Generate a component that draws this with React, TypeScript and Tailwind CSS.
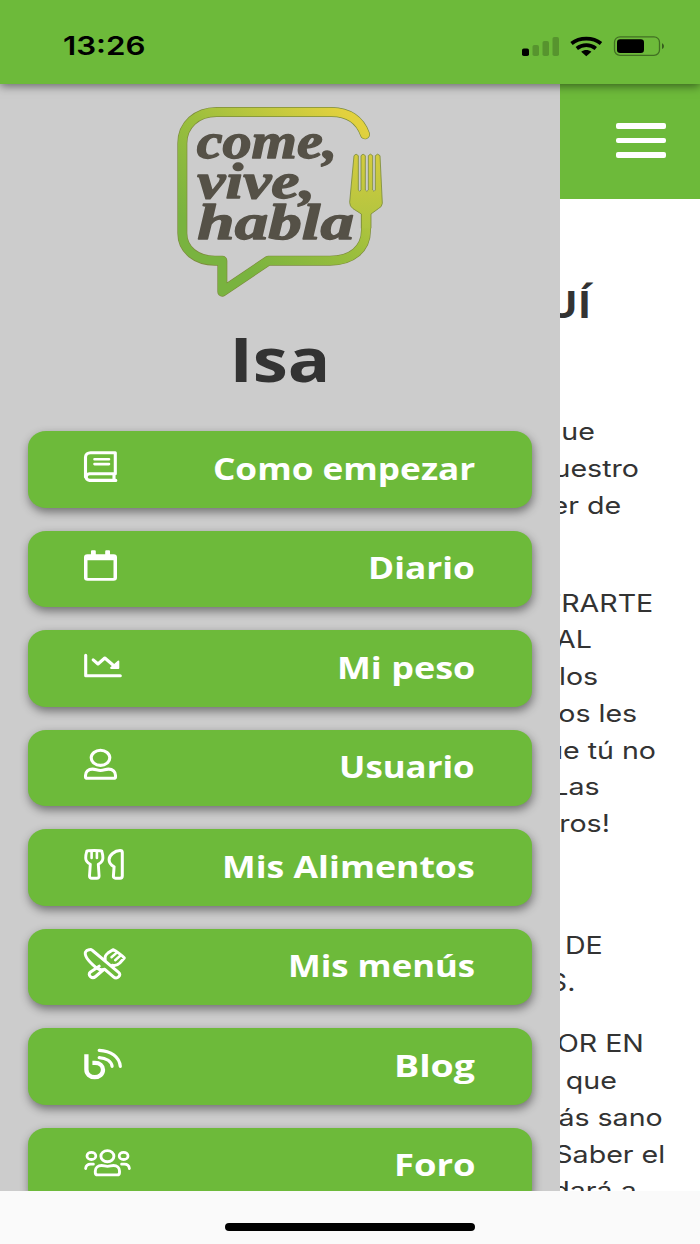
import React, { useLayoutEffect, useRef, useState } from 'react';
import cc from 'clsx';

interface FitTextProps {
  children: React.ReactNode;
  width: number;
  className?: string;
}

// stretches a single line of text horizontally to a given width
function FitText({ children, width, className }: FitTextProps) {
  const ref = useRef<HTMLSpanElement>(null);
  const [scale, setScale] = useState(1);

  useLayoutEffect(() => {
    if (ref.current) setScale(width / ref.current.offsetWidth);
  }, [width]);

  return (
    <span
      ref={ref}
      className={cc('inline-block whitespace-nowrap', className)}
      style={{ transform: `scaleX(${scale})` }}
    >
      {children}
    </span>
  );
}

function Icon({ children }: { children: React.ReactNode }) {
  return (
    <svg
      viewBox="0 0 52 40"
      className="h-10 w-[52px] shrink-0"
      fill="none"
      stroke="currentColor"
      strokeWidth={3.1}
      strokeLinecap="round"
      strokeLinejoin="round"
    >
      {children}
    </svg>
  );
}

const BookIcon = () => (
  <Icon>
    <path d="M35.3 26.7V5.7H10.5a5 4.5 0 0 0-5 4.5V30M35.8 33.4H9.5a4 3.4 0 0 1 0-6.7H35.3M34 27.5V33" />
    <path d="M14.5 12.3H29M14.5 17.1H29" strokeWidth={2.6} />
  </Icon>
);

const CalendarIcon = () => (
  <Icon>
    <path
      d="M11 8.2V5.2a1 1 0 0 1 1-1h2.8a1 1 0 0 1 1 1v3H25.2V5.2a1 1 0 0 1 1-1H29a1 1 0 0 1 1 1v3h3.6a3.4 3 0 0 1 3.4 3V31.8a3.4 3 0 0 1-3.4 3H7.4a3.4 3 0 0 1-3.4-3V11.2a3.4 3 0 0 1 3.4-3zM7.5 14.2V31.4a.5.5 0 0 0 .5.5H33a.5.5 0 0 0 .5-.5V14.2z"
      fill="currentColor"
      fillRule="evenodd"
      stroke="none"
    />
  </Icon>
);

const ChartIcon = () => (
  <Icon>
    <path d="M5.7 9.2V29.8H40.3" />
    <path d="M13.2 13.8L18 18l6.8-6L33 19" />
    <path d="M31 22L38.4 22V15.4z" fill="currentColor" strokeWidth={1.8} />
  </Icon>
);

const UserIcon = () => (
  <Icon>
    <ellipse cx="20.5" cy="12.8" rx="9.3" ry="7.6" />
    <path d="M12.5 24.1c3.2 0 4.6 1.4 8 1.4s4.8-1.4 8-1.4c4.2 0 7 2.9 7 6.3v1.3c0 .9-.7 1.6-1.7 1.6H7.2c-1 0-1.7-.7-1.7-1.6v-1.3c0-3.4 2.8-6.3 7-6.3z" />
  </Icon>
);

const UtensilsIcon = () => (
  <Icon>
    <path
      d="M6.8 6.2c1-.9 14-.9 15 0 .6 2 1.1 4.5 1.1 6.9 0 3-2 5-4.6 6.2l.8 11.7c.1 1.3-.9 2.2-2.3 2.2h-5c-1.4 0-2.4-.9-2.3-2.2l.8-11.7C7.7 18.1 5.7 16.1 5.7 13.1c0-2.4.5-4.9 1.1-6.9z"
      strokeWidth={2.9}
    />
    <path d="M11.6 6.5V13M16.9 6.5V13" strokeWidth={2.6} />
    <path
      d="M42.3 7.5V31c0 1.3-.9 2.2-2.2 2.2h-4.6c-1.4 0-2.2-.9-2.1-2.2l.7-9.3c-2.6-1.4-5-3.7-5-7 0-4.5 5.5-9 11-9.1 1.4 0 2.2.7 2.2 1.9z"
      strokeWidth={3}
    />
  </Icon>
);

const CrossedUtensilsIcon = () => (
  <Icon>
    <path
      d="M9 5.8c1.1-.5 2.5-.2 3.5.7L38.6 28.4c1.6 1.4 1.6 3 .1 4.3-1.5 1.5-3.6 1.5-5.2.1l-8.7-7.5c-3.5 1.1-6.5.2-9-1.9C9.5 18.1 4 11.5 5.6 7.9 6.2 6.8 7.5 6.1 9 5.8z"
      strokeWidth={3}
    />
    <path
      d="M25.2 15.7c-.6-3 .5-5 2.7-6.6l5.1-3.4c3 1.3 9.3 5.7 11.3 8.3l-4.5 5c-2 2-4.5 2.9-7.4 2.2M19.2 22.2L10.5 28c-1.7 1.4-1.7 3.2-.1 4.6 1.5 1.3 3.6 1.3 5.2-.1l7.5-6.5"
      strokeWidth={3}
    />
    <path d="M36.8 8.6L31.5 13.2M40.5 11.5L35.2 16.2" strokeWidth={2.5} />
  </Icon>
);

const BlogIcon = () => (
  <Icon>
    <path
      d="M6.4 10.2V25.6C6.4 30 10 33.2 14.7 33.2S23 30 23 25.8C23 21.8 19.6 18.9 15 18.9H12.4"
      strokeWidth={4.3}
      strokeLinecap="butt"
    />
    <path d="M19.2 6.3C31 6.7 39.5 13 40.3 22.3M19.2 13.6c7.3.4 12.3 3.9 12.9 8.7" strokeWidth={3.2} />
  </Icon>
);

const UsersIcon = () => (
  <Icon>
    <ellipse cx="27.4" cy="13.2" rx="6.5" ry="5.6" strokeWidth={2.9} />
    <ellipse cx="11.4" cy="12.9" rx="4.4" ry="3.6" strokeWidth={2.8} />
    <ellipse cx="43.6" cy="12.9" rx="4.4" ry="3.6" strokeWidth={2.8} />
    <path
      d="M21.5 22.5c2.6 0 3.4.9 6 .9s3.4-.9 6-.9c3.6 0 6 2.4 6 5.5v1.7c0 1.3-1 2.2-2.4 2.2H17.7c-1.4 0-2.4-.9-2.4-2.2V28c0-3.1 2.6-5.5 6.2-5.5z"
      strokeWidth={2.9}
    />
    <path d="M5.6 25.5c.4-3 2.5-4.3 5-4.3h2.8M49.4 25.5c-.4-3-2.5-4.3-5-4.3h-2.8" strokeWidth={2.8} />
  </Icon>
);

const menuItems = [
  { label: 'Como empezar', width: 262, icon: BookIcon },
  { label: 'Diario', width: 107, icon: CalendarIcon },
  { label: 'Mi peso', width: 138, icon: ChartIcon },
  { label: 'Usuario', width: 136, icon: UserIcon },
  { label: 'Mis Alimentos', width: 253, icon: UtensilsIcon },
  { label: 'Mis menús', width: 187, icon: CrossedUtensilsIcon },
  { label: 'Blog', width: 81, icon: BlogIcon },
  { label: 'Foro', width: 81, icon: UsersIcon },
];

const paragraphs = [
  [
    { text: 'que', right: 595 },
    { text: 'nuestro', right: 639 },
    { text: 'ser de', right: 621 },
  ],
  [
    { text: 'MOSTRARTE', right: 653 },
    { text: 'IGUAL', right: 592 },
    { text: 'a los', right: 598 },
    { text: 'otros les', right: 637 },
    { text: 'que tú no', right: 656 },
    { text: '¡Las', right: 600 },
    { text: 'otros!', right: 610 },
  ],
  [
    { text: 'DE', right: 603 },
    { text: 'MENÚS.', right: 575 },
  ],
  [
    { text: 'MEJOR EN', right: 644 },
    { text: 'que', right: 617 },
    { text: 'más sano', right: 663 },
    { text: 'Saber el', right: 665 },
    { text: 'ayudará a', right: 637 },
  ],
];

// space above each paragraph
const paragraphGaps = ['mt-0', 'mt-[61px]', 'mt-[85px]', 'mt-[25px]'];

function StatusBar() {
  return (
    <div className="relative z-20 flex h-[84px] shrink-0 items-center justify-between bg-[#6dba3a] pt-[7px] pr-[35px] pl-[63px] shadow-[0_2px_9px_rgba(0,0,0,0.5)]">
      <FitText width={83} className="origin-left font-['Inter',sans-serif] text-[26px] leading-8 font-semibold text-black">
        13:26
      </FitText>
      <svg viewBox="0 0 144 24" className="h-6 w-36">
        <rect x="1" y="14.5" width="7" height="7.5" rx="1.8" />
        <g fill="#000" fillOpacity="0.2">
          <rect x="11.5" y="11" width="6.5" height="11" rx="1.8" />
          <rect x="21.5" y="7" width="6.5" height="15" rx="1.8" />
          <rect x="31.5" y="3" width="6.5" height="19" rx="1.8" />
        </g>
        <g fill="none" stroke="#000" strokeWidth="3.8">
          <path d="M50.5 9.4C58.8 2.9 71.8 2.9 80 9.4" />
          <path d="M55.8 14.4C61.5 10 69.2 10 74.8 14.4" />
        </g>
        <path d="M60.2 17.8c3-2.3 7.2-2.3 10.2 0L65.3 22.3z" />
        <rect x="93.5" y="2.8" width="45" height="18.6" rx="5.5" fill="none" stroke="#000" strokeOpacity="0.4" strokeWidth="1.3" />
        <rect x="96" y="5.3" width="27" height="13.7" rx="3.2" />
        <path d="M141 9.3c2.6.8 2.6 5 0 5.8z" fillOpacity="0.5" />
      </svg>
    </div>
  );
}

const bubblePath =
  'M615 118C600 76 565 51 515 51H170C110 51 67 90 67 145V415C67 465 110 497 165 497H187V590L325 497H510C575 497 618 462 618 405V350';

function Logo() {
  return (
    <svg viewBox="0 0 720 630" className="h-[210px] w-60 shrink-0">
      <defs>
        <linearGradient id="leaf" x1="150" y1="560" x2="560" y2="60" gradientUnits="userSpaceOnUse">
          <stop offset="0.15" stopColor="#79b33f" />
          <stop offset="0.55" stopColor="#9dbf3d" />
          <stop offset="1" stopColor="#e2d13e" />
        </linearGradient>
        <linearGradient id="fork" x1="0" y1="180" x2="0" y2="400" gradientUnits="userSpaceOnUse">
          <stop offset="0" stopColor="#d3cb3e" />
          <stop offset="1" stopColor="#aec440" />
        </linearGradient>
      </defs>
      <g fill="none" strokeLinecap="round" strokeLinejoin="round">
        <path d={bubblePath} stroke="#7c8b3c" strokeWidth="30" />
        <path d={bubblePath} stroke="url(#leaf)" strokeWidth="26" />
      </g>
      <path
        d="M604 400V357L579 341Q569 334 569 322L582 182q6-9 13 0V285q4 8 8 0V182q6-9 13 0V285q5 8 9 0V182q6-9 13 0V285q4 8 8 0V182q7-9 14 0L667 325Q666 336 655 341L633 357V400"
        fill="url(#fork)"
        stroke="#7c8b3c"
        strokeWidth="2.5"
      />
      <g
        className="font-['Liberation_Serif',serif] text-[150px] font-bold italic"
        fill="#555147"
        stroke="#555147"
        strokeWidth="4"
        strokeLinejoin="round"
      >
        <text x="110" y="190" textLength="422" lengthAdjust="spacingAndGlyphs">come,</text>
        <text x="112" y="309" textLength="354" lengthAdjust="spacingAndGlyphs">vive,</text>
        <text x="112" y="432" textLength="470" lengthAdjust="spacingAndGlyphs">habla</text>
      </g>
    </svg>
  );
}

function Drawer() {
  return (
    <aside className="flex w-[560px] shrink-0 flex-col items-center bg-[#ccc] px-7 pt-[11px]">
      <Logo />
      <h1 className="flex h-[126px] shrink-0 items-center pb-[18px] font-['Open_Sans',sans-serif] text-[60px] leading-none font-bold text-[#333]">
        <FitText width={101}>Isa</FitText>
      </h1>
      <nav className="flex w-full flex-col gap-[23px]">
        {menuItems.map(({ label, width, icon: ItemIcon }) => (
          <button
            key={label}
            className="flex h-[76.5px] w-full shrink-0 items-center justify-between rounded-[18px/16px] bg-[#6dba3a] pr-[57px] pb-[3px] pl-[52px] text-white shadow-[1px_4px_10px_rgba(0,0,0,0.45)]"
          >
            <span className="pb-0.5">
              <ItemIcon />
            </span>
            <FitText width={width} className="origin-right font-['Open_Sans',sans-serif] text-[31px] leading-9 font-bold">
              {label}
            </FitText>
          </button>
        ))}
      </nav>
    </aside>
  );
}

function Page() {
  return (
    <main className="min-w-0 flex-1 overflow-hidden bg-white text-[#333]">
      <header className="flex h-[115px] items-center justify-end bg-[#6dba3a] pr-[34.5px] pb-0.5">
        <button className="flex flex-col gap-[9px]">
          <span className="h-[5.5px] w-[49.5px] rounded-xs bg-white" />
          <span className="h-[5.5px] w-[49.5px] rounded-xs bg-white" />
          <span className="h-[5.5px] w-[49.5px] rounded-xs bg-white" />
        </button>
      </header>
      <h2 className="flex h-[215px] justify-end pt-[82px] pr-[109px] font-['Open_Sans',sans-serif] text-[37px] leading-[46px] font-bold">
        <span className="inline-block origin-right scale-x-110">AQUÍ</span>
      </h2>
      {paragraphs.map((lines, i) => (
        <div key={i} className={paragraphGaps[i]}>
          {lines.map(({ text, right }) => (
            <p
              key={text}
              className="flex h-[36.75px] items-center justify-end font-['Inter',sans-serif] text-[24px] whitespace-nowrap"
              style={{ paddingRight: 700 - right }}
            >
              <span className="inline-block origin-right scale-x-119">{text}</span>
            </p>
          ))}
        </div>
      ))}
    </main>
  );
}

export default function App() {
  return (
    <div className="flex h-[1244px] w-[700px] flex-col overflow-hidden bg-white">
      <StatusBar />
      <div className="flex h-[1107px] shrink-0 overflow-hidden">
        <Drawer />
        <Page />
      </div>
      <footer className="relative z-10 flex flex-1 justify-center bg-[#fafafa] pt-8">
        <div className="h-2 w-[250px] rounded-full bg-black" />
      </footer>
    </div>
  );
}
